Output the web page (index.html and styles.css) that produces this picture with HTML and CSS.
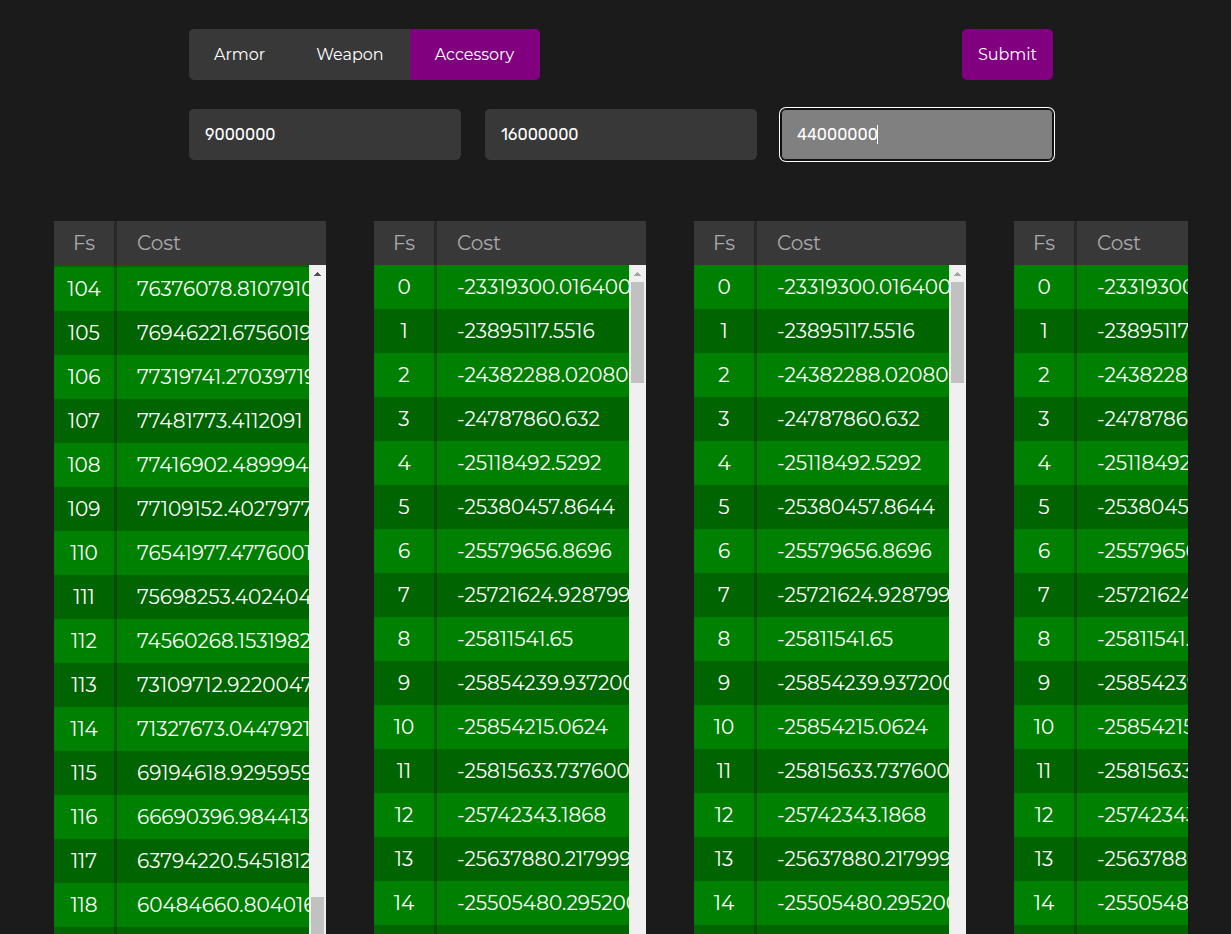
FILE: index.html
```
<!DOCTYPE html>
<html lang="en">
<head>
<meta charset="utf-8">
<meta name="viewport" content="width=device-width, initial-scale=1">
<title>Enhancement cost</title>
<link rel="stylesheet" href="styles.css">
</head>
<body>
<main class="page">
  <form class="controls">
    <div class="toolbar">
      <div class="segments" role="radiogroup" aria-label="Item type">
        <label class="segment"><input type="radio" name="type" value="armor"><span>Armor</span></label>
        <label class="segment"><input type="radio" name="type" value="weapon"><span>Weapon</span></label>
        <label class="segment"><input type="radio" name="type" value="accessory" checked><span>Accessory</span></label>
      </div>
      <button class="submit" type="submit">Submit</button>
    </div>
    <div class="prices">
      <div class="field"><input class="price" type="text" aria-label="Base price" value="9000000"></div>
      <div class="field"><input class="price" type="text" aria-label="First level price" value="16000000"></div>
      <div class="field"><input class="price" id="active-price" type="text" aria-label="Second level price" value="44000000" autofocus><span class="caret" aria-hidden="true"></span></div>
    </div>
  </form>
  <section class="panels" aria-label="Costs"></section>
</main>
<script src="script.js"></script>
</body>
</html>
```

FILE: styles.css
```
* {
  box-sizing: border-box;
}

body {
  margin: 0;
  background: #1b1b1b;
  color: #fff;
  font-family: Montserrat, Inter, "Open Sans", sans-serif;
}

.page {
  display: flex;
  flex-direction: column;
  height: 100vh;
  padding: 29px 43px 0 54px;
  overflow: hidden;
}

.controls {
  display: flex;
  flex-direction: column;
  gap: 29px;
  width: 100%;
  max-width: 864px;
  margin: 0 auto 61px;
}

.toolbar {
  display: flex;
  justify-content: space-between;
}

.segments {
  display: flex;
  border-radius: 5px;
  overflow: hidden;
  background: #383838;
}

.segment {
  position: relative;
  cursor: pointer;
}

.segment input {
  position: absolute;
  inset: 0;
  margin: 0;
  opacity: 0;
}

.segment span {
  display: block;
  height: 51px;
  padding: 16px 26px 16px 25px;
  font-size: 16px;
}

.segment input:checked + span {
  background: #800080;
}

.submit {
  height: 51px;
  padding: 0 16px;
  border: 0;
  border-radius: 5px;
  background: #800080;
  color: #fff;
  font-family: inherit;
  font-size: 16px;
}

.prices {
  display: grid;
  grid-template-columns: repeat(3, 1fr);
  gap: 24px;
}

.field {
  position: relative;
}

.price {
  display: block;
  width: 100%;
  height: 51px;
  padding: 0 16px;
  border: 0;
  border-radius: 5px;
  background: #383838;
  color: #fff;
  font-family: Rubik, Inter, sans-serif;
  font-size: 16px;
  font-weight: 400;
}

.price:focus {
  outline: 0;
  background: #808080;
  box-shadow: inset 0 0 0 1px #101010, 0 0 0 1px #101010, 0 0 0 2px #fff;
  caret-color: transparent;
}

.caret {
  position: absolute;
  top: 16px;
  left: 96px;
  width: 1px;
  height: 19px;
  background: #fff;
}

.panels {
  display: flex;
  flex: 1;
  gap: 48px;
  min-height: 0;
  overflow: hidden;
}

.panel {
  position: relative;
  flex: 0 0 272px;
  overflow: hidden;
}

.costs {
  width: 100%;
  table-layout: fixed;
  border-spacing: 0;
  font-size: 20px;
}

.costs th,
.costs td {
  height: 44px;
  padding: 10px 0 10px 20px;
  overflow: hidden;
  text-align: left;
  vertical-align: top;
  white-space: nowrap;
}

.costs th {
  background: #383838;
  color: #aaa;
  font-weight: 400;
}

.costs .level {
  width: 63px;
  padding-left: 0;
  border-right: 3px solid rgba(0, 0, 0, 0.28);
  text-align: center;
}

.costs td {
  background: #006400;
}

.costs .light td {
  background: #008000;
}

.costs .sliver td {
  height: 2px;
  padding: 0;
}

.scrollbar {
  position: absolute;
  top: 44px;
  right: 0;
  bottom: 0;
  width: 17px;
  background: #f0f0f0;
}

.arrow {
  display: block;
  width: 17px;
  height: 17px;
  fill: #a3a3a3;
}

.thumb {
  height: 101px;
  margin: 0 2px;
  background: #c1c1c1;
}

.scrolled .arrow {
  fill: #505050;
}

.scrolled .thumb {
  margin-top: 615px;
}
```

FILE: script.js
```
const scrolledCosts = [
  "76376078.81079102", "76946221.67560196", "77319741.27039719", "77481773.4112091",
  "77416902.4899944", "77109152.40279770", "76541977.47760010", "75698253.4024048",
  "74560268.15319824", "73109712.92200470", "71327673.04479218", "69194618.92959595",
  "66690396.98441315", "63794220.54518127", "60484660.80401611", ""
];
const initialCosts = [
  "-23319300.0164000", "-23895117.5516", "-24382288.0208000", "-24787860.632",
  "-25118492.5292", "-25380457.8644", "-25579656.8696", "-25721624.9287999",
  "-25811541.65", "-25854239.9372000", "-25854215.0624", "-25815633.7376000",
  "-25742343.1868", "-25637880.2179999", "-25505480.2952000", ""
];

function buildPanel(costs, firstLevel) {
  const scrolled = firstLevel > 0;
  const rows = costs.map((cost, i) =>
    `<tr class="${i % 2 ? "dark" : "light"}"><td class="level">${cost ? firstLevel + i : ""}</td><td>${cost}</td></tr>`
  ).join("");
  const sliver = scrolled ? '<tr class="sliver"><td class="level"></td><td></td></tr>' : "";
  return `<div class="panel${scrolled ? " scrolled" : ""}">
    <table class="costs">
      <thead><tr><th class="level" scope="col">Fs</th><th scope="col">Cost</th></tr></thead>
      <tbody>${sliver}${rows}</tbody>
    </table>
    <div class="scrollbar" aria-hidden="true">
      <svg class="arrow" viewBox="0 0 17 17" shape-rendering="crispEdges"><path d="M8 7h1v1h1v1h1v1h1v1H5v-1h1V9h1V8h1z"/></svg>
      <div class="thumb"></div>
    </div>
  </div>`;
}

document.querySelector(".panels").innerHTML =
  buildPanel(scrolledCosts, 104) +
  buildPanel(initialCosts, 0) +
  buildPanel(initialCosts, 0) +
  buildPanel(initialCosts, 0);

const active = document.getElementById("active-price");
active.focus();
active.setSelectionRange(active.value.length, active.value.length);
```
